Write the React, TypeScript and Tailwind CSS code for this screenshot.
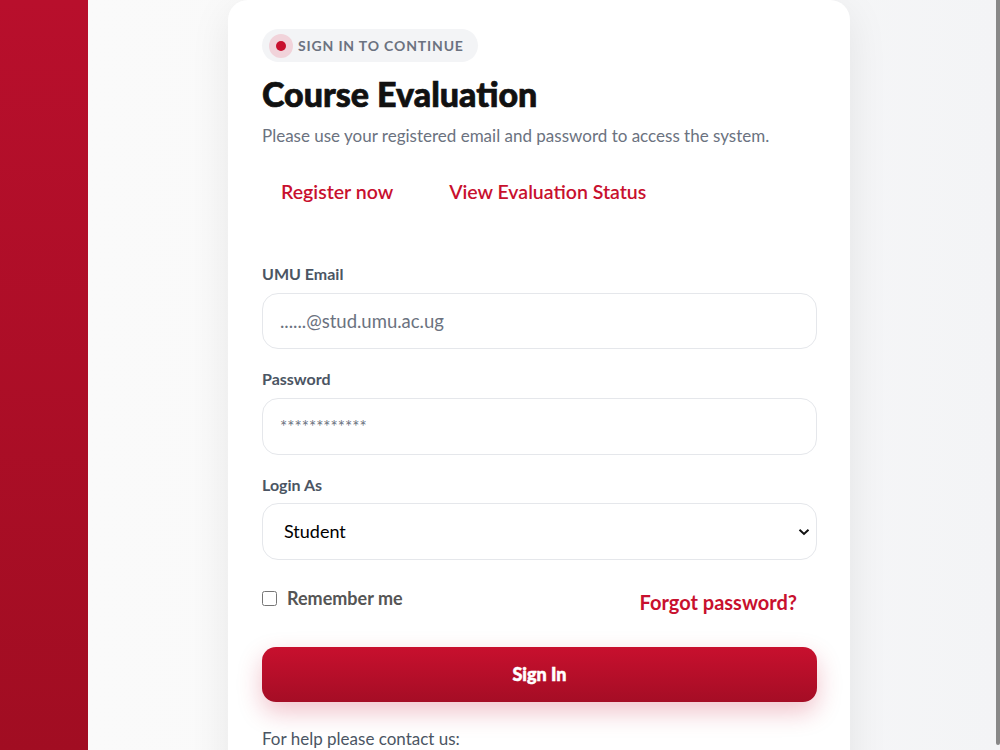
import { useState } from "react";

const font = { fontFamily: "Lato, 'Noto Sans', sans-serif" };

export default function App() {
  const [remember, setRemember] = useState<boolean>(false);
  const [role, setRole] = useState<string>("Student");

  return (
    <div className="flex h-screen w-full overflow-hidden bg-[#fafafa]" style={font}>
      {/* red side strip */}
      <div className="h-screen w-[88px] shrink-0 bg-gradient-to-b from-[#b80f2c] to-[#a10d22]"></div>

      <div className="flex flex-1 justify-center bg-gradient-to-r from-[#fafafa] via-[#f9f9f9] to-[#f3f4f6] pr-[6px]">
        <div className="h-fit w-[622px] rounded-[20px] bg-white pt-[29px] pr-[33px] pb-10 pl-[34px] shadow-[0_10px_40px_rgba(0,0,0,0.08)]">
          {/* badge */}
          <div className="inline-flex h-[33px] items-center gap-[5px] rounded-full bg-[#f3f4f6] pr-[14px] pl-[7px]">
            <span className="flex h-[24px] w-[24px] items-center justify-center rounded-full bg-[#f1d3da]">
              <span className="h-[10px] w-[10px] rounded-full bg-[#c8102e]"></span>
            </span>
            <span className="text-[14px] font-bold tracking-[0.06em] text-[#6b7280] uppercase">
              Sign in to continue
            </span>
          </div>

          <h1 className="mt-[12px] text-[34px] leading-[40px] font-black text-[#111111] [-webkit-text-stroke:0.7px_#111111]">
            Course Evaluation
          </h1>
          <p className="mt-[10px] text-[17px] leading-6 text-[#6b7280]">
            Please use your registered email and password to access the system.
          </p>

          <div className="mt-[22px] flex items-center gap-[18px]">
            <a className="px-[19px] py-2 text-[19.5px] leading-[27px] font-semibold text-[#c8102e]" href="#">
              Register now
            </a>
            <a className="px-[19px] py-2 text-[19.5px] leading-[27px] font-semibold text-[#c8102e]" href="#">
              View Evaluation Status
            </a>
          </div>

          <form className="mt-[51px] flex flex-col" onSubmit={(e) => e.preventDefault()}>
            <label className="text-[16px] leading-5 font-bold text-[#4b5563]">UMU Email</label>
            <input
              className="mt-[9px] h-[56px] w-full rounded-[16px] border border-[#e5e7eb] px-[17px] text-[18.5px] text-[#111] outline-none placeholder:text-[#6b7280]"
              placeholder="......@stud.umu.ac.ug"
            />

            <label className="mt-[20px] text-[16px] leading-5 font-bold text-[#4b5563]">Password</label>
            <input
              type="password"
              className="mt-[9px] h-[57px] w-full rounded-[16px] border border-[#e5e7eb] px-[17px] text-[17px] text-[#111] outline-none placeholder:text-[#6b7280]"
              placeholder="************"
            />

            <label className="mt-[20px] text-[16px] leading-5 font-bold text-[#4b5563]">Login As</label>
            <div className="relative mt-[8px]">
              <select
                value={role}
                onChange={(e) => setRole(e.target.value)}
                className="h-[57px] w-full appearance-none rounded-[16px] border border-[#e5e7eb] bg-white px-[21px] text-[18px] text-black outline-none"
              >
                <option>Student</option>
                <option>Lecturer</option>
                <option>Admin</option>
              </select>
              <svg
                className="pointer-events-none absolute top-1/2 right-[7px] -translate-y-1/2"
                width="12"
                height="8"
                viewBox="0 0 12 8"
              >
                <path d="M1.5 1.8 L6 6 L10.5 1.8" fill="none" stroke="#111" strokeWidth="2" />
              </svg>
            </div>

            <div className="mt-[26px] flex items-start justify-between">
              <label className="flex items-center gap-[10px] text-[18px] leading-6 font-bold text-[#555]">
                <input
                  type="checkbox"
                  checked={remember}
                  onChange={() => setRemember(!remember)}
                  className="h-[15px] w-[15px] accent-[#c8102e]"
                />
                Remember me
              </label>
              <a className="mt-[4px] pr-[20px] text-[20px] leading-6 font-bold text-[#c8102e]" href="#">
                Forgot password?
              </a>
            </div>

            <button
              type="submit"
              className="mt-[33px] h-[55px] w-full rounded-[14px] bg-gradient-to-b from-[#c8102e] to-[#a50d25] text-[18px] font-black text-white shadow-[0_10px_25px_rgba(200,16,46,0.25)] [-webkit-text-stroke:0.5px_#ffffff]"
            >
              Sign In
            </button>
          </form>

          <p className="mt-[24px] text-[17px] text-[#4b5563]">For help please contact us:</p>
        </div>
      </div>

      {/* thin scroll thumb on the right edge */}
      <div className="w-[4px] shrink-0 bg-[#f3f4f6]">
        <div className="h-[745px] w-full rounded-b-[3px] bg-[#888888]"></div>
      </div>
    </div>
  );
}
